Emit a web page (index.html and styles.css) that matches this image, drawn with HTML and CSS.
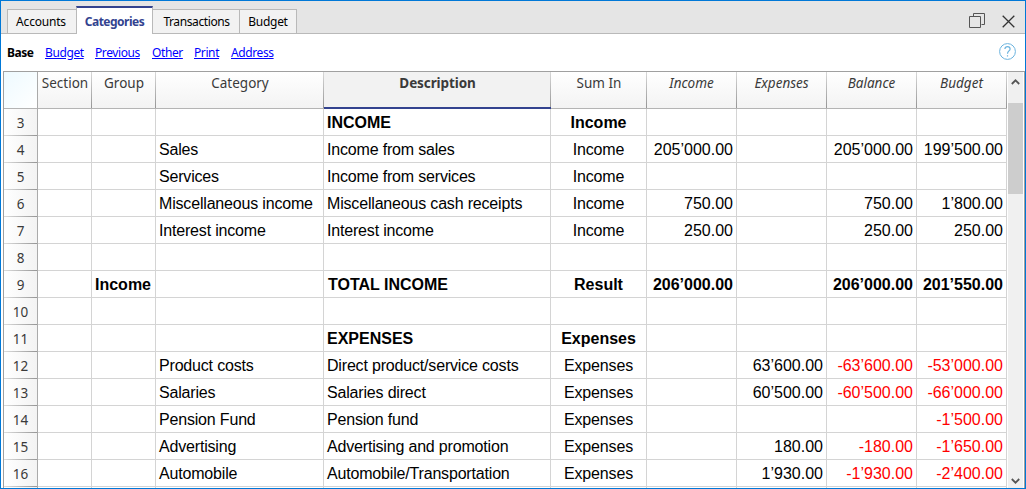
FILE: index.html
```
<!DOCTYPE html>
<html lang="en">
<head>
<meta charset="utf-8">
<title>Categories</title>
<link rel="stylesheet" href="styles.css">
</head>
<body>
<div class="window">
  <header class="tabbar">
    <nav class="tabs">
      <div class="tab tab-accounts"><span>Accounts</span></div>
      <div class="tab tab-active"><span>Categories</span></div>
      <div class="tab tab-transactions"><span>Transactions</span></div>
      <div class="tab tab-budget"><span>Budget</span></div>
    </nav>
    <div class="controls">
      <svg class="restore" width="16" height="16" viewBox="0 0 16 16" fill="none" stroke="#555"><path d="M4.500 3.500V.5H15.500V11.500H12.500"/><path d="M.5 3.500H11.500V14.500H.5Z"/></svg>
      <svg class="close" width="13" height="13" viewBox="0 0 13 13" fill="none" stroke="#333" stroke-width="1.300"><path d="M.7.700 12.300 12.300M12.300.700.700 12.300"/></svg>
    </div>
  </header>
  <div class="views">
    <b class="v-base">Base</b>
    <a class="v-budget">Budget</a>
    <a class="v-previous">Previous</a>
    <a class="v-other">Other</a>
    <a class="v-print">Print</a>
    <a class="v-address">Address</a>
    <svg class="help" width="17" height="17" viewBox="0 0 17 17" fill="none" stroke="#6bb3de"><circle cx="8.500" cy="8.500" r="7.900"/><path d="M5.900 6.100C5.900 4.500 7 3.600 8.500 3.600S11.100 4.500 11.100 5.900C11.100 7.900 8.500 8 8.500 10.700M8.500 12.200V13.600" stroke-width="1.200"/></svg>
  </div>
  <main class="sheet">
    <table class="grid">
      <colgroup><col class="w-num"><col class="w-section"><col class="w-group"><col class="w-category"><col class="w-desc"><col class="w-sum"><col class="w-amt"><col class="w-amt"><col class="w-amt"><col class="w-amt"></colgroup>
      <thead><tr><th class="corner"></th><th>Section</th><th>Group</th><th>Category</th><th class="selected">Description</th><th>Sum In</th><th class="it">Income</th><th class="it">Expenses</th><th class="it">Balance</th><th class="it">Budget</th></tr></thead>
      <tbody>
        <tr class="strong"><th>3</th><td></td><td></td><td></td><td>INCOME</td><td>Income</td><td></td><td></td><td></td><td></td></tr>
        <tr><th>4</th><td></td><td></td><td>Sales</td><td>Income from sales</td><td>Income</td><td>205’000.00</td><td></td><td>205’000.00</td><td>199’500.00</td></tr>
        <tr><th>5</th><td></td><td></td><td>Services</td><td>Income from services</td><td>Income</td><td></td><td></td><td></td><td></td></tr>
        <tr><th>6</th><td></td><td></td><td>Miscellaneous income</td><td>Miscellaneous cash receipts</td><td>Income</td><td>750.00</td><td></td><td>750.00</td><td>1’800.00</td></tr>
        <tr><th>7</th><td></td><td></td><td>Interest income</td><td>Interest income</td><td>Income</td><td>250.00</td><td></td><td>250.00</td><td>250.00</td></tr>
        <tr><th>8</th><td></td><td></td><td></td><td></td><td></td><td></td><td></td><td></td><td></td></tr>
        <tr class="strong total"><th>9</th><td></td><td>Income</td><td></td><td>TOTAL INCOME</td><td>Result</td><td>206’000.00</td><td></td><td>206’000.00</td><td>201’550.00</td></tr>
        <tr><th>10</th><td></td><td></td><td></td><td></td><td></td><td></td><td></td><td></td><td></td></tr>
        <tr class="strong"><th>11</th><td></td><td></td><td></td><td>EXPENSES</td><td>Expenses</td><td></td><td></td><td></td><td></td></tr>
        <tr><th>12</th><td></td><td></td><td>Product costs</td><td>Direct product/service costs</td><td>Expenses</td><td></td><td>63’600.00</td><td class="neg">-63’600.00</td><td class="neg">-53’000.00</td></tr>
        <tr><th>13</th><td></td><td></td><td>Salaries</td><td>Salaries direct</td><td>Expenses</td><td></td><td>60’500.00</td><td class="neg">-60’500.00</td><td class="neg">-66’000.00</td></tr>
        <tr><th>14</th><td></td><td></td><td>Pension Fund</td><td>Pension fund</td><td>Expenses</td><td></td><td></td><td></td><td class="neg">-1’500.00</td></tr>
        <tr><th>15</th><td></td><td></td><td>Advertising</td><td>Advertising and promotion</td><td>Expenses</td><td></td><td>180.00</td><td class="neg">-180.00</td><td class="neg">-1’650.00</td></tr>
        <tr><th>16</th><td></td><td></td><td>Automobile</td><td>Automobile/Transportation</td><td>Expenses</td><td></td><td>1’930.00</td><td class="neg">-1’930.00</td><td class="neg">-2’400.00</td></tr>
        <tr><th></th><td></td><td></td><td></td><td></td><td></td><td></td><td></td><td></td><td></td></tr>
      </tbody>
    </table>
    <div class="scrollbar">
      <svg width="9" height="6" viewBox="0 0 9 6" fill="none" stroke="#555" stroke-width="1.800"><path d="M.8 5 4.500 1.300 8.200 5"/></svg>
      <div class="thumb"></div>
      <svg class="down" width="9" height="6" viewBox="0 0 9 6" fill="none" stroke="#555" stroke-width="1.800"><path d="M.8 1 4.500 4.700 8.200 1"/></svg>
    </div>
  </main>
</div>
</body>
</html>
```
FILE: styles.css
```
* { box-sizing: border-box; }
body { margin: 0; overflow: hidden; font-family: "Noto Sans", "Open Sans", sans-serif; color: #000; }
.window { width: 1026px; height: 489px; border: 1px solid #0078d7; display: flex; flex-direction: column; background: #fff; overflow: hidden; }

.tabbar { height: 33px; flex: none; display: flex; justify-content: space-between; background: #e5e5e5; box-shadow: inset 0 -1px #b9b9b9; }
.tabs { display: flex; align-items: flex-end; padding-left: 6px; }
.tab { height: 25px; border: 1px solid #b9b9b9; background: #f2f2f2; font-size: 12px; line-height: 24px; display: flex; justify-content: center; white-space: nowrap; }
.tab-accounts { width: 69px; border-right: 0; padding-right: 2px; letter-spacing: -.2px; }
.tab-active { width: 77px; height: 28px; background: #fff; border-top: 2px solid #33438f; border-bottom: 0; color: #33438f; font-weight: 700; line-height: 27px; letter-spacing: -.5px; }
.tab-transactions { width: 87px; border-left: 0; letter-spacing: -.55px; letter-spacing: -.55px; letter-spacing: -.55px; }
.tab-transactions { letter-spacing: -.4px; padding-left: 1px; }
.tab-budget { width: 57px; border-left: 0; letter-spacing: -.3px; }
.controls { display: flex; padding: 12px 10px 0 0; gap: 17px; }
.close { margin-top: 2px; }

.views { height: 37px; flex: none; display: flex; align-items: flex-start; padding: 9px 9px 0 6px; font-size: 12px; line-height: 20px; white-space: nowrap; letter-spacing: -.4px; }
.views a { color: #00f; text-decoration: underline; }
.v-base { width: 38px; letter-spacing: -.5px; }
.v-budget { width: 50px; }
.v-previous { width: 57px; }
.v-other { width: 42px; }
.v-print { width: 37px; }
.help { margin-left: auto; }

.sheet { flex: 1; min-height: 0; display: flex; margin-left: 2px; border: 1px solid #a0a0a0; border-bottom: 0; overflow: hidden; }
.grid { width: 1003px; flex: none; table-layout: fixed; border-collapse: separate; border-spacing: 0; align-self: flex-start; }
.w-num { width: 34px; }
.w-section { width: 54px; }
.w-group { width: 64px; }
.w-category { width: 168px; }
.w-desc { width: 227px; }
.w-sum { width: 96px; }
.w-amt { width: 90px; }
th, td { padding: 0; border-right: 1px solid #d4d4d4; border-bottom: 1px solid #d4d4d4; white-space: nowrap; }
thead th { height: 37px; vertical-align: top; padding: 1px 0 0; font-size: 13.500px; line-height: 20px; font-weight: 400; color: #3a3a3a; border-color: #b4b4b4; border-right: 0; background: linear-gradient(#d8d8d8, #969696) right / 1px 100% no-repeat, linear-gradient(#fff, #f3f3f3); }
thead .corner { background: linear-gradient(135deg, #eefaff, #fff); border-right: 1px solid #aaa; }
thead .selected { background: linear-gradient(#d8d8d8, #969696) right / 1px 100% no-repeat, #f2f2f2; border-bottom: 2px solid #33438f; font-weight: 700; letter-spacing: -.1px; }
thead .it { font-style: italic; padding-right: 1px; }
tbody tr { height: 27px; }
tbody th { font-size: 13.500px; line-height: 26px; font-weight: 400; color: #3a3a3a; border-right-color: #aaa; border-bottom: 0; background: linear-gradient(90deg, #ddd, #969696) bottom / 100% 1px no-repeat, linear-gradient(90deg, #fff, #f3f3f3); }
td { padding-top: 2px; font: 16px/24px "Liberation Sans", Arial, sans-serif; }
td:nth-child(3), td:nth-child(4), td:nth-child(5) { padding-left: 3px; letter-spacing: -.18px; }
td:nth-child(6) { text-align: center; letter-spacing: -.15px; }
td:nth-child(n+7) { text-align: right; padding-right: 3px; }
.strong td { font-weight: 700; }
.strong td:nth-child(n+3):nth-child(-n+6) { letter-spacing: 0; }
.total td:nth-child(5) { padding-left: 4px; }
.neg { color: #f00; }

.scrollbar { width: 16px; margin-left: 1px; flex: none; background: #f0f0f0; display: flex; flex-direction: column; align-items: center; padding-top: 7px; border-right: 1px solid #fff; }
.thumb { width: 15px; height: 91px; margin-top: 18px; background: #cdcdcd; }
.down { margin-top: auto; margin-bottom: 4px; }
```
